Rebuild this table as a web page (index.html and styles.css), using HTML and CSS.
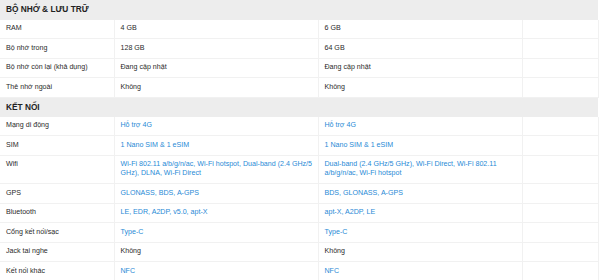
FILE: index.html
```html
<!DOCTYPE html>
<html lang="vi">
<head>
<meta charset="utf-8">
<link rel="stylesheet" href="styles.css">
</head>
<body>
<table class="spec">
  <colgroup>
    <col class="c-label"><col class="c-val"><col class="c-val"><col class="c-empty">
  </colgroup>
  <tbody>
    <tr class="group"><th colspan="4">BỘ NHỚ &amp; LƯU TRỮ</th></tr>
    <tr><td>RAM</td><td>4 GB</td><td>6 GB</td><td></td></tr>
    <tr><td>Bộ nhớ trong</td><td>128 GB</td><td>64 GB</td><td></td></tr>
    <tr><td>Bộ nhớ còn lại (khả dụng)</td><td>Đang cập nhật</td><td>Đang cập nhật</td><td></td></tr>
    <tr><td>Thẻ nhớ ngoài</td><td>Không</td><td>Không</td><td></td></tr>
    <tr class="group"><th colspan="4">KẾT NỐI</th></tr>
    <tr><td>Mạng di động</td><td class="link">Hỗ trợ 4G</td><td class="link">Hỗ trợ 4G</td><td></td></tr>
    <tr><td>SIM</td><td class="link">1 Nano SIM &amp; 1 eSIM</td><td class="link">1 Nano SIM &amp; 1 eSIM</td><td></td></tr>
    <tr><td>Wifi</td><td class="link">Wi-Fi 802.11 a/b/g/n/ac, Wi-Fi hotspot, Dual-band (2.4 GHz/5 GHz), DLNA, Wi-Fi Direct</td><td class="link">Dual-band (2.4 GHz/5 GHz), Wi-Fi Direct, Wi-Fi 802.11 a/b/g/n/ac, Wi-Fi hotspot</td><td></td></tr>
    <tr><td>GPS</td><td class="link">GLONASS, BDS, A-GPS</td><td class="link">BDS, GLONASS, A-GPS</td><td></td></tr>
    <tr><td>Bluetooth</td><td class="link">LE, EDR, A2DP, v5.0, apt-X</td><td class="link">apt-X, A2DP, LE</td><td></td></tr>
    <tr><td>Cổng kết nối/sạc</td><td class="link">Type-C</td><td class="link">Type-C</td><td></td></tr>
    <tr><td>Jack tai nghe</td><td>Không</td><td>Không</td><td></td></tr>
    <tr><td>Kết nối khác</td><td class="link">NFC</td><td class="link">NFC</td><td></td></tr>
  </tbody>
</table>
</body>
</html>
```
FILE: styles.css
```css
html, body {
  margin: 0;
  padding: 0;
  background: #fff;
}
body {
  font-family: "Liberation Sans", Arial, sans-serif;
  color: #2a2a2a;
}
.spec {
  width: 598px;
  border-collapse: collapse;
  table-layout: fixed;
}
.c-label { width: 114px; }
.c-val { width: 204px; }
.c-empty { width: 76px; }
.spec th {
  text-align: left;
  background: #ededed;
  font-size: 8.3px;
  font-weight: bold;
  color: #222;
  height: 19.5px;
  padding: 0 6px;
  box-sizing: border-box;
  line-height: 9px;
}
.spec td {
  font-size: 7.1px;
  line-height: 9px;
  padding: 4.75px 0 4.75px 6px;
  vertical-align: top;
  border: 1px solid #f1f1f1;
  border-top: none;
}
.spec td:first-child {
  border-left: none;
}
.spec td.link {
  color: #288ad6;
}
```
